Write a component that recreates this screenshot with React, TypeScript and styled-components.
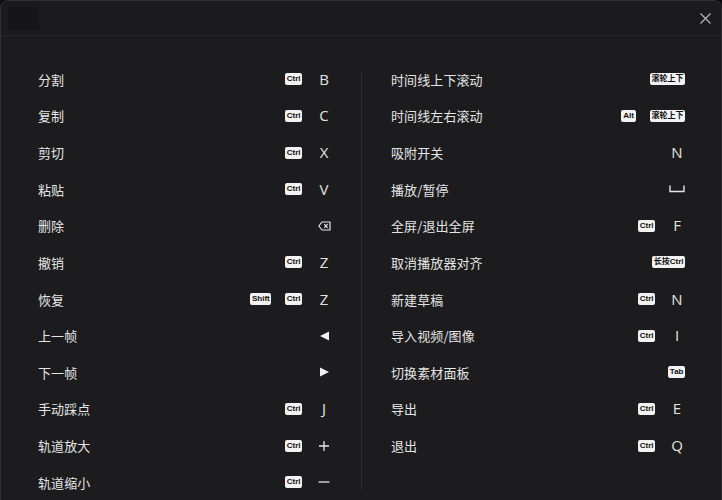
import React from "react";
import styled, { createGlobalStyle } from "styled-components";

const Global = createGlobalStyle`
  html, body { margin: 0; padding: 0; background: #0d0d0e; }
  body { font-family: "Noto Sans CJK SC", "Noto Sans", sans-serif; }
`;

const Window = styled.div`
  width: 722px;
  height: 500px;
  box-sizing: border-box;
  background: #1c1c1e;
  border: 1px solid #2f2f31;
  border-bottom: none;
  border-radius: 8px 8px 0 0;
  display: flex;
  flex-direction: column;
  overflow: hidden;
`;

const Header = styled.div`
  height: 34px;
  flex: none;
  display: flex;
  align-items: center;
  justify-content: space-between;
  padding: 0 9px 0 7px;
  border-bottom: 1px solid #27272a;
  background: #1b1b1d;
`;

const TitleBox = styled.div`
  width: 31px;
  height: 23px;
  background: #161618;
  border-radius: 2px;
`;

const CloseBtn = styled.div`
  width: 14px;
  height: 14px;
  display: flex;
  align-items: center;
  justify-content: center;
  color: #b4b4b4;
`;

const Body = styled.div`
  display: grid;
  grid-template-columns: 294px 1px 294px;
  column-gap: 29px;
  padding: 25px 0 0 37px;
`;

const Column = styled.div`
  display: flex;
  flex-direction: column;
`;

const Divider = styled.div`
  width: 1px;
  background: #2c2c2f;
  margin-top: 11px;
  height: 418px;
`;

const Row = styled.div`
  height: 36.64px;
  display: flex;
  align-items: center;
  justify-content: space-between;
`;

const Label = styled.span`
  font-size: 13px;
  color: #e4e4e4;
  letter-spacing: 0.1px;
`;

const Keys = styled.div`
  display: flex;
  align-items: center;
  gap: 14px;
`;

const Badge = styled.span`
  display: inline-flex;
  align-items: center;
  justify-content: center;
  height: 12px;
  min-width: 15px;
  padding: 0 1.5px;
  box-sizing: border-box;
  background: #f2f2f2;
  color: #111;
  border-radius: 2px;
  font-family: "Liberation Sans", "Noto Sans CJK SC", sans-serif;
  font-weight: 700;
  font-size: 8px;
  line-height: 1;
  white-space: nowrap;
`;

const Slot = styled.span`
  width: 16px;
  display: inline-flex;
  align-items: center;
  justify-content: center;
  font-family: "Open Sans", "Noto Sans", sans-serif;
  font-size: 15px;
  font-weight: 400;
  color: #e2e2e2;
  line-height: 1;
`;

type Key = { b?: string } | { s: React.ReactNode };

const Backspace = () => (
  <svg width="13" height="10" viewBox="0 0 13 10">
    <path d="M4 1 H12 V9 H4 L0.8 5 Z" fill="none" stroke="#e6e6e6" strokeWidth="1.2" strokeLinejoin="round" />
    <path d="M6.3 3.2 L9.6 6.8 M9.6 3.2 L6.3 6.8" stroke="#e6e6e6" strokeWidth="1.2" />
  </svg>
);

const TriLeft = () => (
  <svg width="11" height="10" viewBox="0 0 11 10">
    <path d="M10 0.5 V9.5 L1 5 Z" fill="#f0f0f0" />
  </svg>
);
const TriRight = () => (
  <svg width="11" height="10" viewBox="0 0 11 10">
    <path d="M1 0.5 V9.5 L10 5 Z" fill="#f0f0f0" />
  </svg>
);
const Space = () => (
  <svg width="16" height="8" viewBox="0 0 16 8">
    <path d="M1 0.5 V6.5 H15 V0.5" fill="none" stroke="#e6e6e6" strokeWidth="1.4" />
  </svg>
);
const Plus = () => (
  <svg width="12" height="12" viewBox="0 0 12 12">
    <path d="M6 1 V11 M1 6 H11" stroke="#e6e6e6" strokeWidth="1.3" />
  </svg>
);
const Minus = () => (
  <svg width="12" height="12" viewBox="0 0 12 12">
    <path d="M0.5 6 H11.5" stroke="#e6e6e6" strokeWidth="1.3" />
  </svg>
);

type Item = { label: string; keys: Key[] };

const left: Item[] = [
  { label: "分割", keys: [{ b: "Ctrl" }, { s: "B" }] },
  { label: "复制", keys: [{ b: "Ctrl" }, { s: "C" }] },
  { label: "剪切", keys: [{ b: "Ctrl" }, { s: "X" }] },
  { label: "粘贴", keys: [{ b: "Ctrl" }, { s: "V" }] },
  { label: "删除", keys: [{ s: <Backspace /> }] },
  { label: "撤销", keys: [{ b: "Ctrl" }, { s: "Z" }] },
  { label: "恢复", keys: [{ b: "Shift" }, { b: "Ctrl" }, { s: "Z" }] },
  { label: "上一帧", keys: [{ s: <TriLeft /> }] },
  { label: "下一帧", keys: [{ s: <TriRight /> }] },
  { label: "手动踩点", keys: [{ b: "Ctrl" }, { s: "J" }] },
  { label: "轨道放大", keys: [{ b: "Ctrl" }, { s: <Plus /> }] },
  { label: "轨道缩小", keys: [{ b: "Ctrl" }, { s: <Minus /> }] },
];

const right: Item[] = [
  { label: "时间线上下滚动", keys: [{ b: "滚轮上下" }] },
  { label: "时间线左右滚动", keys: [{ b: "Alt" }, { b: "滚轮上下" }] },
  { label: "吸附开关", keys: [{ s: "N" }] },
  { label: "播放/暂停", keys: [{ s: <Space /> }] },
  { label: "全屏/退出全屏", keys: [{ b: "Ctrl" }, { s: "F" }] },
  { label: "取消播放器对齐", keys: [{ b: "长按Ctrl" }] },
  { label: "新建草稿", keys: [{ b: "Ctrl" }, { s: "N" }] },
  { label: "导入视频/图像", keys: [{ b: "Ctrl" }, { s: "I" }] },
  { label: "切换素材面板", keys: [{ b: "Tab" }] },
  { label: "导出", keys: [{ b: "Ctrl" }, { s: "E" }] },
  { label: "退出", keys: [{ b: "Ctrl" }, { s: "Q" }] },
];

const ShortcutRow = ({ item }: { item: Item }) => (
  <Row>
    <Label>{item.label}</Label>
    <Keys>
      {item.keys.map((k, i) =>
        "b" in k ? <Badge key={i}>{k.b}</Badge> : <Slot key={i}>{(k as { s: React.ReactNode }).s}</Slot>
      )}
    </Keys>
  </Row>
);

export default function App() {
  return (
    <>
      <Global />
      <Window>
        <Header>
          <TitleBox />
          <CloseBtn>
            <svg width="11" height="11" viewBox="0 0 11 11">
              <path d="M0.5 0.5 L10.5 10.5 M10.5 0.5 L0.5 10.5" stroke="#b8b8b8" strokeWidth="1.2" />
            </svg>
          </CloseBtn>
        </Header>
        <Body>
          <Column>
            {left.map((it) => (
              <ShortcutRow key={it.label} item={it} />
            ))}
          </Column>
          <Divider />
          <Column>
            {right.map((it) => (
              <ShortcutRow key={it.label} item={it} />
            ))}
          </Column>
        </Body>
      </Window>
    </>
  );
}
